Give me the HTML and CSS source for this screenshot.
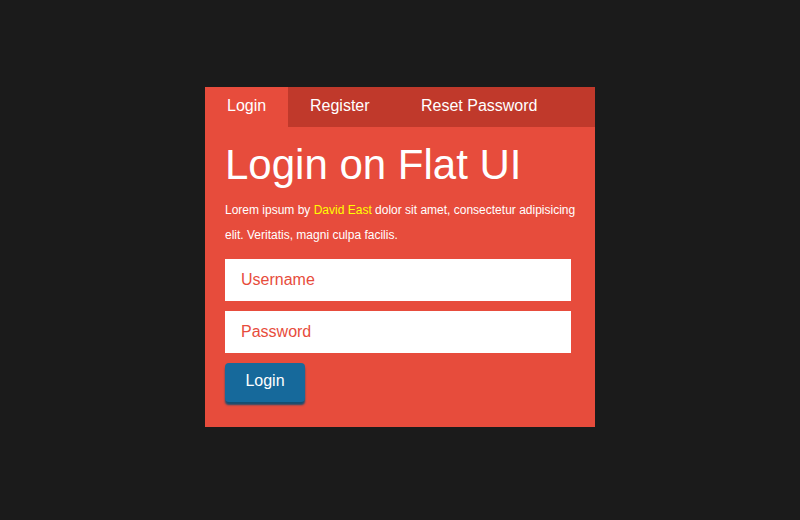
FILE: index.html
```html
<!DOCTYPE html>
<html>
<head>
<meta charset="utf-8">
<link rel="stylesheet" href="styles.css">
</head>
<body>
<div class="page">
  <div class="card">
    <nav class="tabs">
      <a class="tab tab-login active">Login</a>
      <a class="tab tab-register">Register</a>
      <a class="tab tab-reset">Reset Password</a>
    </nav>
    <div class="content">
      <h1 class="title">Login on Flat UI</h1>
      <p class="desc">Lorem ipsum by <span class="author">David East</span> dolor sit amet, consectetur adipisicing elit. Veritatis, magni culpa facilis.</p>
      <form class="form">
        <input class="field" type="text" placeholder="Username">
        <input class="field" type="password" placeholder="Password">
        <button class="btn" type="button">Login</button>
      </form>
    </div>
  </div>
</div>
</body>
</html>
```
FILE: styles.css
```css
html, body {
  margin: 0;
  padding: 0;
  background: #1b1b1b;
  font-family: "Liberation Sans", Arial, sans-serif;
}
.page {
  width: 800px;
  height: 520px;
  display: flex;
  justify-content: center;
  align-items: flex-start;
  padding-top: 87px;
  box-sizing: border-box;
}
.card {
  width: 390px;
  height: 340px;
  background: #e74c3c;
  box-sizing: border-box;
}
.tabs {
  display: flex;
  height: 40px;
  background: #c0392b;
}
.tab {
  display: block;
  height: 40px;
  line-height: 38px;
  color: #fff;
  font-size: 16px;
  padding-left: 22px;
  box-sizing: border-box;
}
.tab-login { width: 83px; }
.tab-register { width: 111px; }
.active { background: #e74c3c; }
.content {
  padding: 13px 12px 0 20px;
}
.title {
  margin: 0;
  font-size: 42px;
  font-weight: normal;
  color: #fff;
  line-height: 50px;
}
.desc {
  margin: 8px 0 11px 0;
  font-size: 12px;
  line-height: 25px;
  color: #fff;
}
.author { color: #ffff00; }
.form {
  display: flex;
  flex-direction: column;
  align-items: flex-start;
  gap: 10px;
}
.field {
  width: 346px;
  height: 42px;
  border: none;
  outline: none;
  padding: 0 16px;
  box-sizing: border-box;
  font-family: "Liberation Sans", Arial, sans-serif;
  font-size: 16px;
  background: #fff;
  color: #e74c3c;
  margin: 0;
}
.field::placeholder { color: #e74c3c; opacity: 1; }
.btn {
  width: 80px;
  height: 39px;
  border: none;
  border-radius: 4px;
  background: #16699b;
  color: #fff;
  font-family: "Liberation Sans", Arial, sans-serif;
  font-size: 16px;
  padding: 0 0 4px 0;
  box-shadow: 0 3px 2px #134f72;
  margin: 0;
}
```
